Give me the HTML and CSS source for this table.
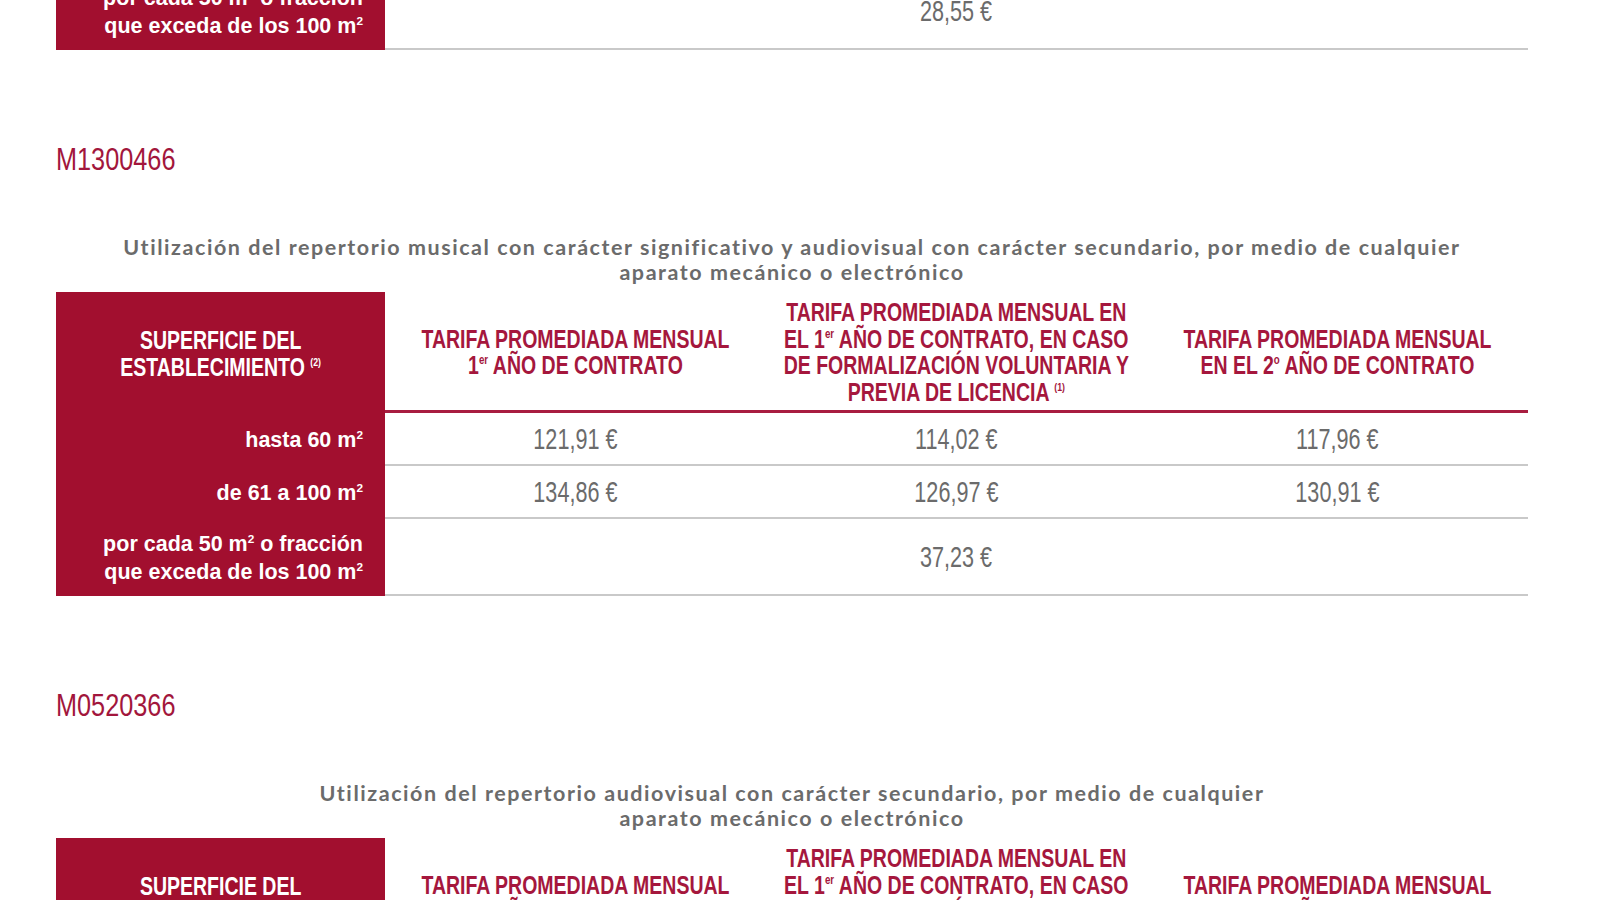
FILE: index.html
```html
<!DOCTYPE html>
<html lang="es">
<head>
<meta charset="utf-8">
<title>Tarifas</title>
<link rel="stylesheet" href="styles.css">
</head>
<body>
<div class="page">
  <div class="grid tail">
    <div class="label tall"><span>por cada 50 m<sup>2</sup> o fracción<br>que exceda de los 100 m<sup>2</sup></span></div>
    <div class="val span tall"><span class="num">28,55 €</span></div>
  </div>

  <section class="block">
    <h2 class="code"><span>M1300466</span></h2>
    <p class="desc">Utilización del repertorio musical con carácter significativo y audiovisual con carácter secundario, por medio de cualquier<br>aparato mecánico o electrónico</p>
    <div class="grid">
      <div class="head first"><span class="cap">SUPERFICIE DEL<br>ESTABLECIMIENTO <sup class="note">(2)</sup></span></div>
      <div class="head"><span class="cap">TARIFA PROMEDIADA MENSUAL<br>1<sup class="ord">er</sup> AÑO DE CONTRATO</span></div>
      <div class="head"><span class="cap">TARIFA PROMEDIADA MENSUAL EN<br>EL 1<sup class="ord">er</sup> AÑO DE CONTRATO, EN CASO<br>DE FORMALIZACIÓN VOLUNTARIA Y<br>PREVIA DE LICENCIA <sup class="note">(1)</sup></span></div>
      <div class="head"><span class="cap">TARIFA PROMEDIADA MENSUAL<br>EN EL 2<sup class="ord">o</sup> AÑO DE CONTRATO</span></div>

      <div class="label"><span>hasta 60 m<sup>2</sup></span></div>
      <div class="val"><span class="num">121,91 €</span></div>
      <div class="val"><span class="num">114,02 €</span></div>
      <div class="val"><span class="num">117,96 €</span></div>

      <div class="label"><span>de 61 a 100 m<sup>2</sup></span></div>
      <div class="val"><span class="num">134,86 €</span></div>
      <div class="val"><span class="num">126,97 €</span></div>
      <div class="val"><span class="num">130,91 €</span></div>

      <div class="label tall"><span>por cada 50 m<sup>2</sup> o fracción<br>que exceda de los 100 m<sup>2</sup></span></div>
      <div class="val span tall"><span class="num">37,23 €</span></div>
    </div>
  </section>

  <section class="block">
    <h2 class="code"><span>M0520366</span></h2>
    <p class="desc">Utilización del repertorio audiovisual con carácter secundario, por medio de cualquier<br>aparato mecánico o electrónico</p>
    <div class="grid">
      <div class="head first"><span class="cap">SUPERFICIE DEL<br>ESTABLECIMIENTO <sup class="note">(2)</sup></span></div>
      <div class="head"><span class="cap">TARIFA PROMEDIADA MENSUAL<br>1<sup class="ord">er</sup> AÑO DE CONTRATO</span></div>
      <div class="head"><span class="cap">TARIFA PROMEDIADA MENSUAL EN<br>EL 1<sup class="ord">er</sup> AÑO DE CONTRATO, EN CASO<br>DE FORMALIZACIÓN VOLUNTARIA Y<br>PREVIA DE LICENCIA <sup class="note">(1)</sup></span></div>
      <div class="head"><span class="cap">TARIFA PROMEDIADA MENSUAL<br>EN EL 2<sup class="ord">o</sup> AÑO DE CONTRATO</span></div>

      <div class="label"><span>hasta 60 m<sup>2</sup></span></div>
      <div class="val"><span class="num">88,11 €</span></div>
      <div class="val"><span class="num">82,41 €</span></div>
      <div class="val"><span class="num">85,26 €</span></div>

      <div class="label"><span>de 61 a 100 m<sup>2</sup></span></div>
      <div class="val"><span class="num">97,47 €</span></div>
      <div class="val"><span class="num">91,77 €</span></div>
      <div class="val"><span class="num">94,62 €</span></div>

      <div class="label tall"><span>por cada 50 m<sup>2</sup> o fracción<br>que exceda de los 100 m<sup>2</sup></span></div>
      <div class="val span tall"><span class="num">26,91 €</span></div>
    </div>
  </section>
</div>
</body>
</html>
```

FILE: styles.css
```css
html, body {
  margin: 0;
  padding: 0;
  background: #ffffff;
  overflow: hidden;
}

.page {
  padding: 0 72px 0 56px;
  font-family: "Liberation Sans", Arial, sans-serif;
}

.grid {
  display: grid;
  grid-template-columns: 329px repeat(3, minmax(0, 1fr));
}

.tail {
  margin-top: -27px;
}

.block {
  margin: 0;
}

.code {
  margin: 89px 0 0;
  font-family: "Liberation Sans", Arial, sans-serif;
  font-weight: 400;
  font-size: 32px;
  line-height: 40px;
  color: #a2163c;
}

.code span {
  display: inline-block;
  transform: scaleX(0.79);
  transform-origin: left center;
}

.desc {
  margin: 56px 0 7px;
  text-align: center;
  font-family: Lato, "Liberation Sans", sans-serif;
  font-weight: 700;
  font-size: 21.5px;
  line-height: 25px;
  letter-spacing: 1.55px;
  color: #6b6b6b;
}

.head {
  box-sizing: border-box;
  height: 121px;
  display: flex;
  align-items: center;
  justify-content: center;
  text-align: center;
  font-weight: 700;
  font-size: 25px;
  line-height: 26.5px;
  color: #a5173d;
  border-bottom: 3px solid #a81d40;
  padding-top: 2px;
  min-width: 0;
}

.head.first {
  background: #a20f2f;
  color: #ffffff;
  border-bottom: 0;
}

.cap {
  display: inline-block;
  white-space: nowrap;
  transform: scaleX(0.78);
  transform-origin: center center;
}

.label {
  box-sizing: border-box;
  height: 53px;
  background: #a20f2f;
  color: #ffffff;
  display: flex;
  align-items: center;
  justify-content: flex-end;
  text-align: right;
  padding-right: 22px;
  font-weight: 700;
  font-size: 21.5px;
  line-height: 28px;
  white-space: nowrap;
}

.val {
  box-sizing: border-box;
  height: 53px;
  display: flex;
  align-items: center;
  justify-content: center;
  font-size: 30px;
  color: #6b6b6b;
  border-bottom: 2px solid #c9c9c9;
  min-width: 0;
}

.num {
  display: inline-block;
  white-space: nowrap;
  transform: scaleX(0.72);
  transform-origin: center center;
}

.tall {
  height: 77px;
}

.span {
  grid-column: 2 / 5;
}

sup {
  font-size: 0.55em;
  line-height: 0;
  vertical-align: 0.7em;
}

sup.note {
  font-size: 0.45em;
  vertical-align: 0.9em;
}

sup.ord {
  font-size: 0.5em;
  vertical-align: 0.8em;
}
```
